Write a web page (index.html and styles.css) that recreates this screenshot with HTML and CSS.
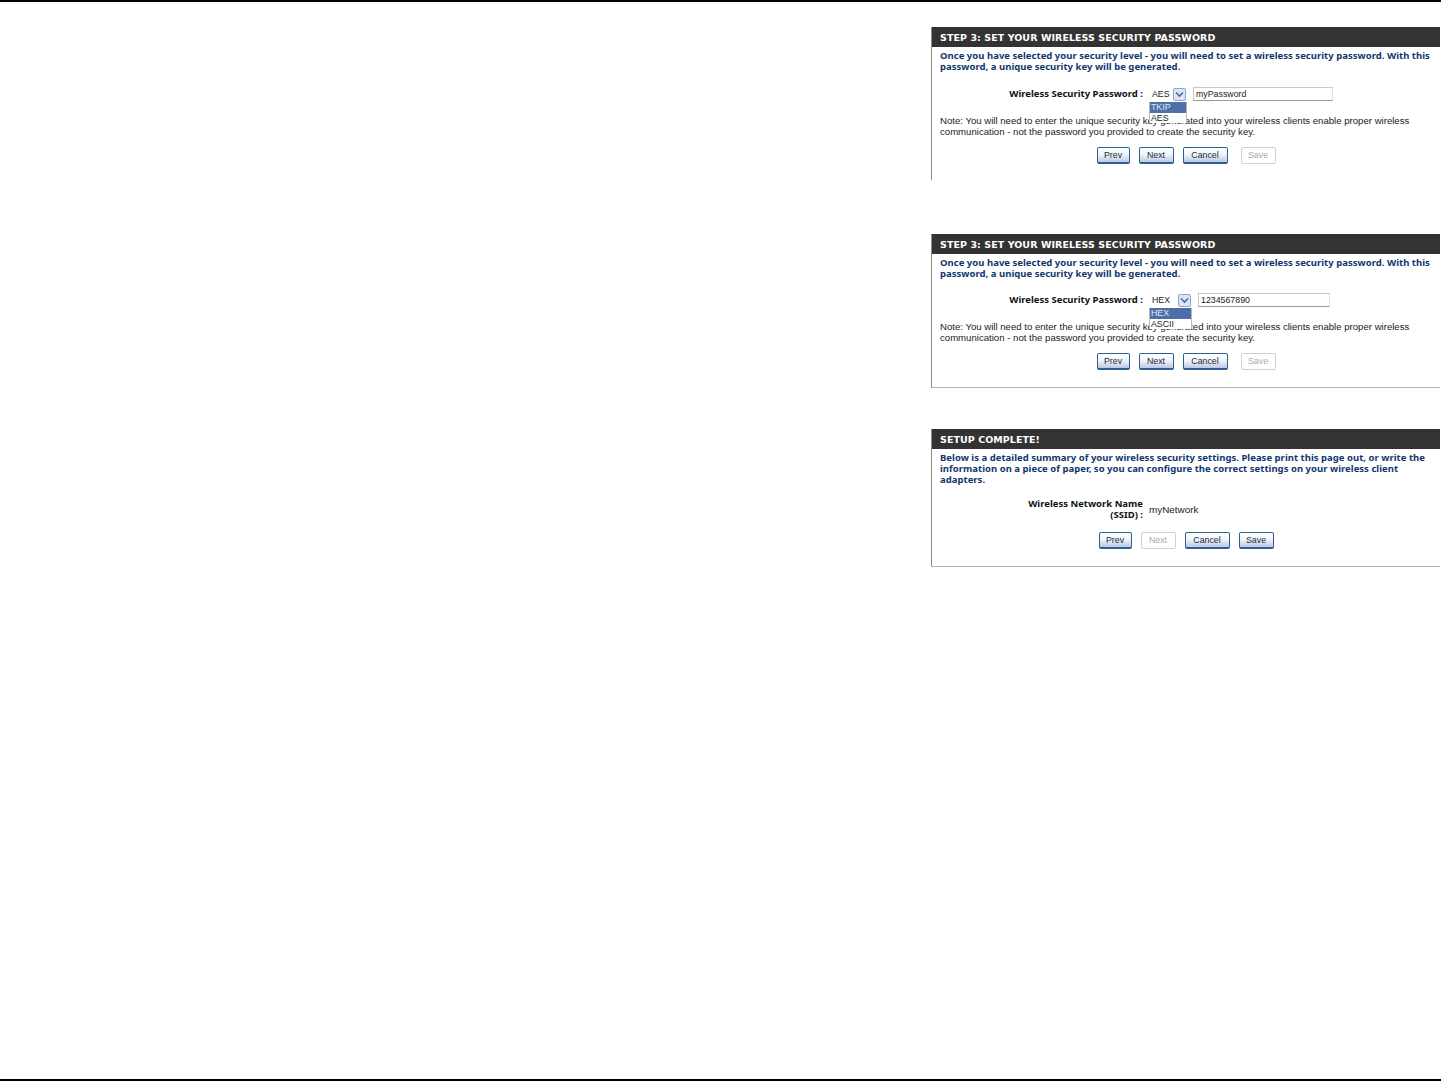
FILE: index.html
```html
<!DOCTYPE html>
<html lang="en">
<head>
<meta charset="utf-8">
<title>Wireless Security Setup</title>
<link rel="stylesheet" href="styles.css">
</head>
<body>
<main class="page">
  <section class="panel panel-a">
    <h2 class="bar">STEP 3: SET YOUR WIRELESS SECURITY PASSWORD</h2>
    <p class="intro">Once you have selected your security level - you will need to set a wireless security password. With this password, a unique security key will be generated.</p>
    <div class="row">
      <span class="label">Wireless Security Password :</span>
      <div class="select select-aes">
        <span class="select-value">AES</span>
        <span class="select-arrow"><svg width="9" height="7" viewBox="0 0 9 7"><path d="M1 1.5 4.5 5 8 1.5" fill="none" stroke="#4a6a9a" stroke-width="1.6"/></svg></span>
        <ul class="menu">
          <li class="menu-on">TKIP</li>
          <li>AES</li>
        </ul>
      </div>
      <span class="field field-a">myPassword</span>
    </div>
    <p class="note">Note: You will need to enter the unique security key generated into your wireless clients enable proper wireless communication - not the password you provided to create the security key.</p>
    <div class="buttons">
      <span class="btn btn-prev">Prev</span>
      <span class="btn btn-next">Next</span>
      <span class="btn btn-cancel">Cancel</span>
      <span class="btn btn-save off">Save</span>
    </div>
  </section>

  <section class="panel panel-b">
    <h2 class="bar">STEP 3: SET YOUR WIRELESS SECURITY PASSWORD</h2>
    <p class="intro">Once you have selected your security level - you will need to set a wireless security password. With this password, a unique security key will be generated.</p>
    <div class="row">
      <span class="label">Wireless Security Password :</span>
      <div class="select select-hex">
        <span class="select-value">HEX</span>
        <span class="select-arrow"><svg width="9" height="7" viewBox="0 0 9 7"><path d="M1 1.5 4.5 5 8 1.5" fill="none" stroke="#4a6a9a" stroke-width="1.6"/></svg></span>
        <ul class="menu">
          <li class="menu-on">HEX</li>
          <li>ASCII</li>
        </ul>
      </div>
      <span class="field field-b">1234567890</span>
    </div>
    <p class="note">Note: You will need to enter the unique security key generated into your wireless clients enable proper wireless communication - not the password you provided to create the security key.</p>
    <div class="buttons">
      <span class="btn btn-prev">Prev</span>
      <span class="btn btn-next">Next</span>
      <span class="btn btn-cancel">Cancel</span>
      <span class="btn btn-save off">Save</span>
    </div>
  </section>

  <section class="panel panel-c">
    <h2 class="bar">SETUP COMPLETE!</h2>
    <p class="intro">Below is a detailed summary of your wireless security settings. Please print this page out, or write the information on a piece of paper, so you can configure the correct settings on your wireless client adapters.</p>
    <div class="row row-ssid">
      <span class="label label-ssid">Wireless Network Name<br>(SSID) :</span>
      <span class="value">myNetwork</span>
    </div>
    <div class="buttons">
      <span class="btn btn-prev">Prev</span>
      <span class="btn btn-next off">Next</span>
      <span class="btn btn-cancel">Cancel</span>
      <span class="btn btn-save">Save</span>
    </div>
  </section>
</main>
</body>
</html>
```
FILE: styles.css
```css
* { box-sizing: border-box; }
html, body { margin: 0; padding: 0; background: #fff; }
body { font-family: "Liberation Sans", sans-serif; color: #222; }

.page {
  width: 1441px;
  height: 1081px;
  border-top: 2px solid #000;
  border-bottom: 2px solid #000;
  padding-left: 931px;
  padding-top: 25px;
  overflow: hidden;
}

.panel {
  width: 509px;
  border-left: 1px solid #8a8a8a;
  display: flow-root;
}
.panel-a { height: 153px; }
.panel-b { height: 154px; margin-top: 54px; border-bottom: 1px solid #b5b5b5; }
.panel-c { height: 138px; margin-top: 41px; border-bottom: 1px solid #b5b5b5; }

.bar {
  margin: 0;
  height: 20px;
  padding-left: 8px;
  background: #333;
  color: #fff;
  font: bold 9.5px/21px "DejaVu Sans", sans-serif;
  letter-spacing: 0.06px;
}

.intro {
  margin: 3px 0 0;
  padding: 0 8px;
  color: #10366e;
  font: bold 9.5px/11px "Noto Sans", sans-serif;
  letter-spacing: 0.025px;
}

.row {
  display: flex;
  align-items: center;
  height: 14px;
  margin-top: 15px;
}
.panel-b .row { margin-top: 14px; }
.label {
  width: 211px;
  margin-bottom: 2px;
  text-align: right;
  font: bold 9.5px/11px "Noto Sans", sans-serif;
  color: #111;
}

.select {
  position: relative;
  display: flex;
  align-items: center;
  justify-content: space-between;
  height: 14px;
  margin-left: 6px;
  padding: 0 1px 0 3px;
  font-size: 8.8px;
  background: #fff;
}
.select-aes { width: 38px; }
.select-hex { width: 43px; }
.select-arrow {
  display: flex;
  align-items: center;
  justify-content: center;
  width: 13px;
  height: 13px;
  border: 1px solid #8fa6c8;
  border-radius: 2px;
  background: #dbe5f5;
}
.menu {
  position: absolute;
  left: 0;
  right: 0;
  top: 15px;
  height: 21px;
  margin: 0;
  padding: 0;
  list-style: none;
  background: #fff;
  border-right: 1px solid #b8b8b8;
  border-left: 1px solid #b8b8b8;
  font-size: 8.8px;
  line-height: 10px;
  z-index: 1;
}
.menu li { padding-left: 1px; height: 10px; }
.menu .menu-on { background: #4f6fa8; color: #dfe7f5; height: 11px; line-height: 11px; }

.field {
  height: 14px;
  margin-left: 6px;
  padding-left: 2px;
  border: 1px solid #c8c8c8;
  border-right-color: #ddd;
  border-bottom-color: #999;
  font-size: 8.8px;
  line-height: 13px;
}
.field-a { width: 140px; }
.field-b { width: 132px; }

.note {
  margin: 15px 0 0;
  padding: 0 8px;
  font-size: 9.6px;
  line-height: 10.5px;
  color: #222;
}

.panel-c .row-ssid { height: 22px; margin-top: 13px; }
.label-ssid { line-height: 11px; margin-bottom: 0; }
.value { margin-left: 6px; font-size: 9.9px; color: #222; }

.buttons {
  display: flex;
  justify-content: center;
  gap: 9px;
  margin-top: 10px;
}
.panel-c .buttons { margin-top: 12px; }

.btn {
  display: block;
  height: 17px;
  text-align: center;
  font-size: 8.8px;
  line-height: 15px;
  color: #1a2a40;
  border: 1px solid #2f5f92;
  border-bottom-width: 2px;
  border-radius: 2px;
  background: linear-gradient(#fff 0%, #f3f5f9 45%, #b9c9e2 100%);
}
.btn-prev { width: 33px; }
.btn-next { width: 35px; }
.btn-cancel { width: 45px; }
.btn-save { width: 35px; }
.panel-a .btn-save, .panel-b .btn-save { margin-left: 4px; }
.btn.off {
  border: 1px solid #d0d0d0;
  background: #fff;
  color: #aaa;
  line-height: 15px;
}
```
